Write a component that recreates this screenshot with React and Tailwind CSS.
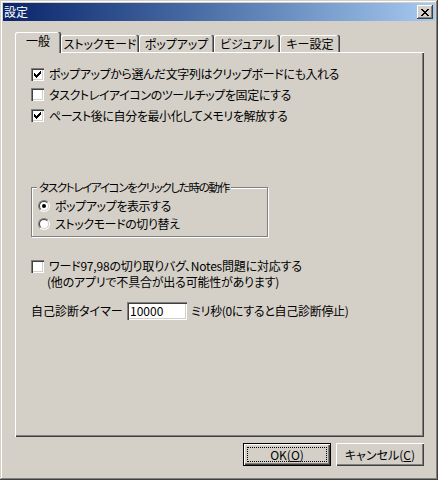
import React from "react";

function CheckMark() {
  const cols = [2, 3, 4, 3, 2, 1, 0];
  return (
    <svg width="13" height="13" viewBox="0 0 13 13" className="block" shapeRendering="crispEdges">
      {cols.map((r, i) => (
        <rect key={i} x={3 + i} y={3 + r} width="1" height="3" fill="#000" />
      ))}
    </svg>
  );
}

function Check({ checked }) {
  return (
    <span className="w-[13px] h-[13px] shrink-0 bg-white shadow-[inset_1px_1px_0_#808080,inset_2px_2px_0_#404040,inset_-1px_-1px_0_#ffffff,inset_-2px_-2px_0_#d4d0c8]">
      {checked && <CheckMark />}
    </span>
  );
}

function Radio({ on }) {
  return (
    <span className="w-[12px] h-[12px] shrink-0 rounded-full border border-t-[#808080] border-l-[#808080] border-b-white border-r-white flex">
      <span className="flex-1 rounded-full border border-t-[#404040] border-l-[#404040] border-b-[#d4d0c8] border-r-[#d4d0c8] bg-white flex items-center justify-center">
        {on && <span className="w-[4px] h-[4px] rounded-full bg-black" />}
      </span>
    </span>
  );
}

function CloseGlyph() {
  const rows = [
    [[0, 2], [6, 2]],
    [[1, 2], [5, 2]],
    [[2, 4]],
    [[3, 2]],
    [[2, 4]],
    [[1, 2], [5, 2]],
    [[0, 2], [6, 2]],
  ];
  return (
    <svg width="8" height="7" viewBox="0 0 8 7" className="block" shapeRendering="crispEdges">
      {rows.map((segs, y) =>
        segs.map(([x, w], j) => <rect key={y + "-" + j} x={x} y={y} width={w} height="1" fill="#000" />)
      )}
    </svg>
  );
}

function Tab({ label, w }) {
  return (
    <div
      className={`${w} h-[17px] flex items-center justify-center rounded-t-[2px] shadow-[inset_-1px_0_0_#404040,inset_-2px_0_0_#808080,inset_1px_1px_0_#ffffff]`}
    >
      {label}
    </div>
  );
}

export default function App() {
  return (
    <div className="w-[438px] h-[480px] bg-[#d4d0c8] p-[3px] flex flex-col text-[12px] leading-[14px] text-black font-['Noto_Sans_CJK_JP',sans-serif] [font-feature-settings:'palt'] shadow-[inset_-1px_-1px_0_#404040,inset_1px_1px_0_#d4d0c8,inset_-2px_-2px_0_#808080,inset_2px_2px_0_#ffffff]">
      {/* Title bar */}
      <div className="h-[18px] flex items-center justify-between bg-linear-to-r from-[#0a246a] to-[#a6caf0] pl-[1px] pr-[2px]">
        <span className="text-white">設定</span>
        <div className="w-[16px] h-[14px] bg-[#d4d0c8] flex items-center justify-center shadow-[inset_-1px_-1px_0_#404040,inset_1px_1px_0_#ffffff,inset_-2px_-2px_0_#808080]">
          <CloseGlyph />
        </div>
      </div>

      <div className="pl-[12px] pt-[11px] flex flex-col w-[421px]">
        {/* Tabs */}
        <div className="flex items-end h-[20px]">
          <div className="relative z-10 w-[46px] h-[21px] -mb-[1px] bg-[#d4d0c8] flex items-center justify-center pb-[3px] rounded-t-[2px] shadow-[inset_-1px_0_0_#404040,inset_-2px_0_0_#808080,inset_1px_1px_0_#ffffff]">
            一般
          </div>
          <Tab label="ストックモード" w="w-[78px]" />
          <Tab label="ポップアップ" w="w-[75px]" />
          <Tab label="ビジュアル" w="w-[66px]" />
          <Tab label="キー設定" w="w-[60px]" />
        </div>

        {/* Panel */}
        <div className="w-[409px] h-[385px] pl-[16px] pt-[12px] flex flex-col shadow-[inset_1px_1px_0_#ffffff,inset_-1px_-1px_0_#404040,inset_-2px_-2px_0_#808080]">
          <div className="h-[20px] flex items-center gap-[5px] tracking-[-0.4px]">
            <Check checked />
            <span>ポップアップから選んだ文字列はクリップボードにも入れる</span>
          </div>
          <div className="h-[21px] flex items-center gap-[5px] tracking-[-0.4px]">
            <Check />
            <span>タスクトレイアイコンのツールチップを固定にする</span>
          </div>
          <div className="h-[21px] flex items-center gap-[5px] tracking-[-0.4px]">
            <Check checked />
            <span>ペースト後に自分を最小化してメモリを解放する</span>
          </div>

          <fieldset className="mt-[54px] w-[237px] border border-[#808080] pl-[6px] pt-[3px] pb-[3px] shadow-[1px_1px_0_#ffffff,inset_1px_1px_0_#ffffff]">
            <legend className="-ml-[1px] px-[2px] bg-[#d4d0c8] whitespace-nowrap text-[11.5px] tracking-[-1.3px]">タスクトレイアイコンをクリックした時の動作</legend>
            <div className="h-[18px] flex items-center gap-[5px] tracking-[-0.4px]">
              <Radio on />
              <span>ポップアップを表示する</span>
            </div>
            <div className="h-[18px] flex items-center gap-[5px] tracking-[-0.4px]">
              <Radio />
              <span>ストックモードの切り替え</span>
            </div>
          </fieldset>

          <div className="mt-[21px] flex items-start gap-[5px] tracking-[-0.2px]">
            <span className="mt-[2px] flex">
              <Check />
            </span>
            <div className="flex flex-col leading-[16px]">
              <span>ワード97,98の切り取りバグ、Notes問題に対応する</span>
              <span className="-ml-[2px]">(他のアプリで不具合が出る可能性があります)</span>
            </div>
          </div>

          <div className="mt-[12px] h-[18px] flex items-center">
            <span className="w-[96px]">自己診断タイマー</span>
            <div className="w-[60px] h-[18px] bg-white flex items-center pl-[3px] shadow-[inset_1px_1px_0_#808080,inset_2px_2px_0_#404040,inset_-1px_-1px_0_#ffffff,inset_-2px_-2px_0_#d4d0c8]">
              10000
            </div>
            <span className="ml-[4px] tracking-[-0.3px]">ミリ秒(0にすると自己診断停止)</span>
          </div>
        </div>

        {/* Buttons */}
        <div className="mt-[6px] flex justify-end gap-[5px] w-[409px]">
          <div className="w-[88px] h-[23px] border border-black flex">
            <div className="flex-1 p-[3px] flex shadow-[inset_1px_1px_0_#ffffff,inset_-1px_-1px_0_#404040,inset_-2px_-2px_0_#808080]">
              <div className="flex-1 border border-dotted border-black flex items-center justify-center">
                <span>
                  OK(<span className="underline">O</span>)
                </span>
              </div>
            </div>
          </div>
          <div className="w-[88px] h-[23px] flex items-center justify-center shadow-[inset_1px_1px_0_#ffffff,inset_-1px_-1px_0_#404040,inset_-2px_-2px_0_#808080]">
            <span>
              キャンセル(<span className="underline">C</span>)
            </span>
          </div>
        </div>
      </div>
    </div>
  );
}
